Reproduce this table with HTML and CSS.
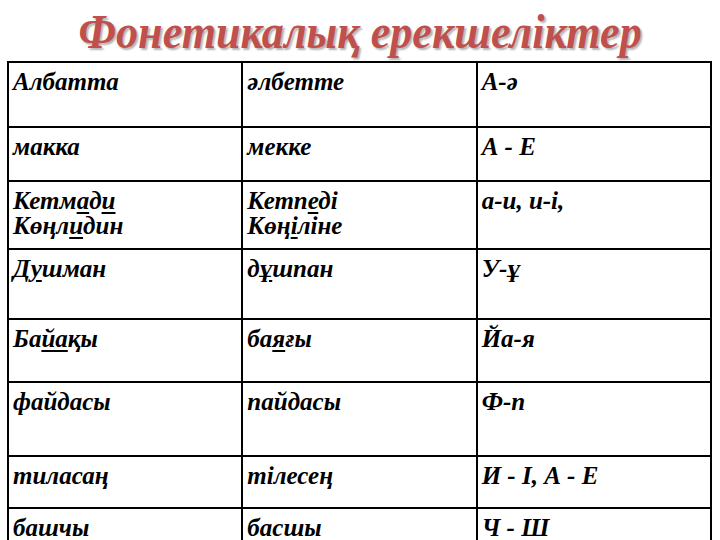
FILE: index.html
```html
<!DOCTYPE html>
<html lang="kk">
<head>
<meta charset="utf-8">
<title>Фонетикалық ерекшеліктер</title>
<link rel="stylesheet" href="styles.css">
</head>
<body>
<div class="slide">
  <div class="head"><h1 class="title">Фонетикалық ерекшеліктер</h1></div>
  <table class="grid">
    <tr class="r1"><td>Албатта</td><td>әлбетте</td><td>А-ә</td></tr>
    <tr class="r2"><td>макка</td><td>мекке</td><td>А - Е</td></tr>
    <tr class="r3"><td>Кетм<u>а</u>д<u>и</u><br>Көңл<u>и</u>дин</td><td>Кетп<u>е</u>ді<br>Көң<u>і</u>ліне</td><td>а-и, и-і,</td></tr>
    <tr class="r4"><td>Д<u>у</u>шман</td><td>д<u>ұ</u>шпан</td><td>У-ұ</td></tr>
    <tr class="r5"><td>Ба<u>йа</u>қы</td><td>ба<u>я</u>ғы</td><td>Йа-я</td></tr>
    <tr class="r6"><td>файдасы</td><td>пайдасы</td><td>Ф-п</td></tr>
    <tr class="r7"><td>тиласаң</td><td>тілесең</td><td>И - І, А - Е</td></tr>
    <tr class="r8"><td>башчы</td><td>басшы</td><td>Ч - Ш</td></tr>
  </table>
</div>
</body>
</html>
```
FILE: styles.css
```css
html, body {
  margin: 0;
  padding: 0;
  background: #ffffff;
}
.slide {
  width: 720px;
  height: 540px;
  overflow: hidden;
}
.head {
  height: 61px;
  display: flex;
  justify-content: center;
  align-items: flex-start;
}
.title {
  margin: 4px 0 0 0;
  white-space: nowrap;
  font-family: "Liberation Serif", serif;
  font-style: italic;
  font-weight: bold;
  font-size: 48px;
  line-height: 56px;
  color: #c0504d;
  text-shadow: 2px 2px 2px rgba(0, 0, 0, 0.3);
  transform: scaleX(0.92);
}
.grid {
  margin-left: 7px;
  width: 705px;
  border-collapse: collapse;
  table-layout: fixed;
  font-family: "Liberation Serif", serif;
  font-style: italic;
  font-weight: bold;
  font-size: 25px;
  line-height: 25px;
  color: #000;
}
.grid td {
  font-family: "Liberation Serif", serif;
  border: 2px solid #000;
  vertical-align: top;
  padding: 6px 4px 0 4px;
  width: 33.3%;
}
.grid u {
  text-decoration-thickness: 2px;
  text-underline-offset: 3px;
}
.r1 { height: 65px; }
.r2 { height: 54px; }
.r3 { height: 68px; }
.r4 { height: 70px; }
.r5 { height: 63px; }
.r6 { height: 74px; }
.r7 { height: 52px; }
.r8 { height: 40px; }
```
